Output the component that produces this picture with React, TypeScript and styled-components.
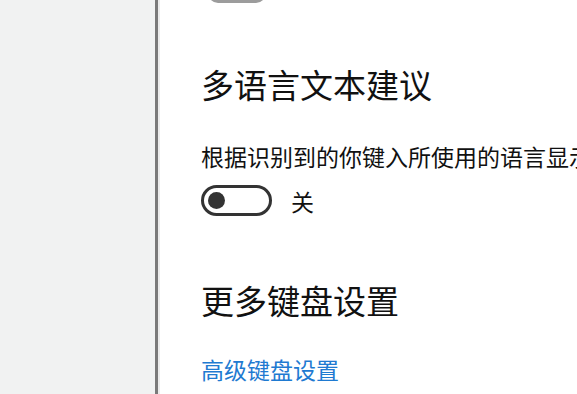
import React from "react";
import styled, { createGlobalStyle } from "styled-components";

const Global = createGlobalStyle`
  html, body { margin: 0; padding: 0; background: #ffffff; overflow: hidden; }
  body { font-family: "Noto Sans CJK SC", "Noto Sans", sans-serif; }
`;

const Page = styled.div`
  display: flex;
  width: 577px;
  height: 394px;
  overflow: hidden;
  background: #ffffff;
`;

const Sidebar = styled.div`
  width: 155px;
  flex-shrink: 0;
  background: #f1f2f2;
`;

const Divider = styled.div`
  width: 3px;
  flex-shrink: 0;
  background: #7a7a7a;
  border-right: 2px solid #ececec;
`;

const Content = styled.div`
  flex: 1;
  min-width: 0;
  display: flex;
  flex-direction: column;
  align-items: flex-start;
  padding-left: 41px;
  color: #111111;
  overflow: hidden;
`;

const CutButton = styled.div`
  width: 58px;
  height: 20px;
  margin-top: -17px;
  margin-left: 7px;
  background: #9c9c9c;
  border-radius: 14px;
`;

const Heading = styled.div<{ $top: number }>`
  margin-top: ${(p) => p.$top}px;
  font-size: 33px;
  line-height: 40px;
  height: 40px;
  font-weight: 400;
  white-space: nowrap;
`;

const Description = styled.div`
  margin-top: 37px;
  font-size: 23px;
  line-height: 30px;
  height: 30px;
  white-space: nowrap;
`;

const ToggleRow = styled.div`
  margin-top: 14px;
  display: flex;
  align-items: center;
  gap: 19px;
  height: 31px;
`;

const Toggle = styled.div`
  box-sizing: border-box;
  width: 71px;
  height: 31px;
  border: 3px solid #333333;
  border-radius: 16px;
  display: flex;
  align-items: center;
  padding-left: 4px;
`;

const Knob = styled.div`
  width: 17px;
  height: 17px;
  border-radius: 50%;
  background: #333333;
`;

const ToggleLabel = styled.span`
  font-size: 23px;
  line-height: 30px;
`;

const Link = styled.a`
  margin-top: 34px;
  font-size: 23px;
  line-height: 30px;
  color: #1f7ad1;
  text-decoration: none;
  white-space: nowrap;
`;

export default function App() {
  return (
    <>
      <Global />
      <Page>
        <Sidebar />
        <Divider />
        <Content>
          <CutButton />
          <Heading $top={61}>多语言文本建议</Heading>
          <Description>根据识别到的你键入所使用的语言显示文本建议</Description>
          <ToggleRow>
            <Toggle>
              <Knob />
            </Toggle>
            <ToggleLabel>关</ToggleLabel>
          </ToggleRow>
          <Heading $top={64}>更多键盘设置</Heading>
          <Link href="#">高级键盘设置</Link>
        </Content>
      </Page>
    </>
  );
}
